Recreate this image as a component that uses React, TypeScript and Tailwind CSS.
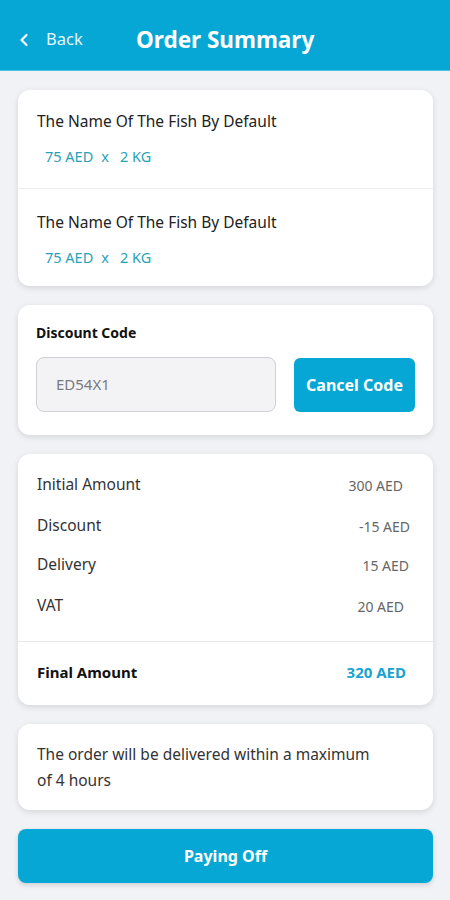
import { ChevronLeft } from 'lucide-react'

const items = [
  { name: 'The Name Of The Fish By Default', price: '75 AED', qty: '2 KG' },
  { name: 'The Name Of The Fish By Default', price: '75 AED', qty: '2 KG' },
]

const totals = [
  { label: 'Initial Amount', value: '300 AED', h: 'h-[42px]', pr: 'pr-[30px]' },
  { label: 'Discount', value: '-15 AED', h: 'h-[40px]', pr: 'pr-[23px]' },
  { label: 'Delivery', value: '15 AED', h: 'h-[38px]', pr: 'pr-[24px]' },
  { label: 'VAT', value: '20 AED', h: 'h-[44px]', pr: 'pr-[29px]' },
]

const card = 'bg-white rounded-[12px] shadow-[0_2px_6px_rgba(0,0,0,0.12)]'

export default function App() {
  return (
    <div className="min-h-[900px] bg-[#f1f2f6] font-['Noto_Sans',sans-serif] text-[#1d1d1d]">
      {/* Header */}
      <header className="h-[71px] pt-[9px] bg-[#07a7d5] flex items-center text-white border-b border-[#4fc2e3]">
        <div className="flex items-center pl-[14px] w-[136px]">
          <ChevronLeft className="size-[20px]" strokeWidth={2.6} />
          <span className="ml-[12px] text-[16.5px] text-[#e6f6fb]">Back</span>
        </div>
        <h1 className="text-[22.5px] font-bold">Order Summary</h1>
      </header>

      <main className="px-[18px] pt-[19px] flex flex-col gap-[19px] w-[451px]">
        {/* Items */}
        <section className={card}>
          {items.map((item, i) => (
            <div
              key={i}
              className={`px-[19px] h-[98px] flex flex-col justify-center ${i > 0 ? 'border-t border-[#ececef] pt-[3px]' : 'pb-[1px]'}`}
            >
              <p className="text-[15.5px] leading-[20px] text-[#222]">{item.name}</p>
              <p className="mt-[15px] pl-[8px] text-[14.5px] leading-[20px] text-[#2aa1b8]">
                {item.price}
                <span className="mx-[8px]">x</span>
                <span className="ml-[3px]">{item.qty}</span>
              </p>
            </div>
          ))}
        </section>

        {/* Discount code */}
        <section className={`${card} px-[18px] pt-[18px] pb-[23px]`}>
          <p className="text-[14px] font-bold leading-[20px] text-[#111]">Discount Code</p>
          <div className="mt-[14px] flex items-center gap-[18px]">
            <div className="w-[240px] h-[55px] rounded-[8px] bg-[#f3f3f6] border border-[#cfcfd4] flex items-center pl-[19px] text-[15px] text-[#7a7a80]">
              ED54X1
            </div>
            <button className="w-[121px] h-[54px] rounded-[6px] bg-[#07a7d5] text-white text-[16px] font-bold">
              Cancel Code
            </button>
          </div>
        </section>

        {/* Totals */}
        <section className={card}>
          <div className="pt-[10px] pb-[13px]">
            {totals.map((row) => (
              <div key={row.label} className={`${row.h} flex items-center justify-between pl-[19px] ${row.pr}`}>
                <span className="text-[15.5px] text-[#333]">{row.label}</span>
                <span className="text-[14px] text-[#666]">{row.value}</span>
              </div>
            ))}
          </div>
          <div className="border-t border-[#e8e8ec] h-[64px] pb-[3px] flex items-center justify-between pl-[19px] pr-[27px]">
            <span className="text-[15px] font-bold text-[#111]">Final Amount</span>
            <span className="text-[15px] font-bold text-[#18a4cf]">320 AED</span>
          </div>
        </section>

        {/* Delivery note */}
        <section className={`${card} px-[19px] h-[86px] flex items-center`}>
          <p className="text-[15.5px] leading-[26px] text-[#333]">
            The order will be delivered within a maximum
            <br />
            of 4 hours
          </p>
        </section>

        {/* Pay */}
        <button className="h-[54px] rounded-[8px] bg-[#07a7d5] text-white text-[16px] font-bold shadow-[0_2px_5px_rgba(0,0,0,0.15)]">
          Paying Off
        </button>
      </main>
    </div>
  )
}
